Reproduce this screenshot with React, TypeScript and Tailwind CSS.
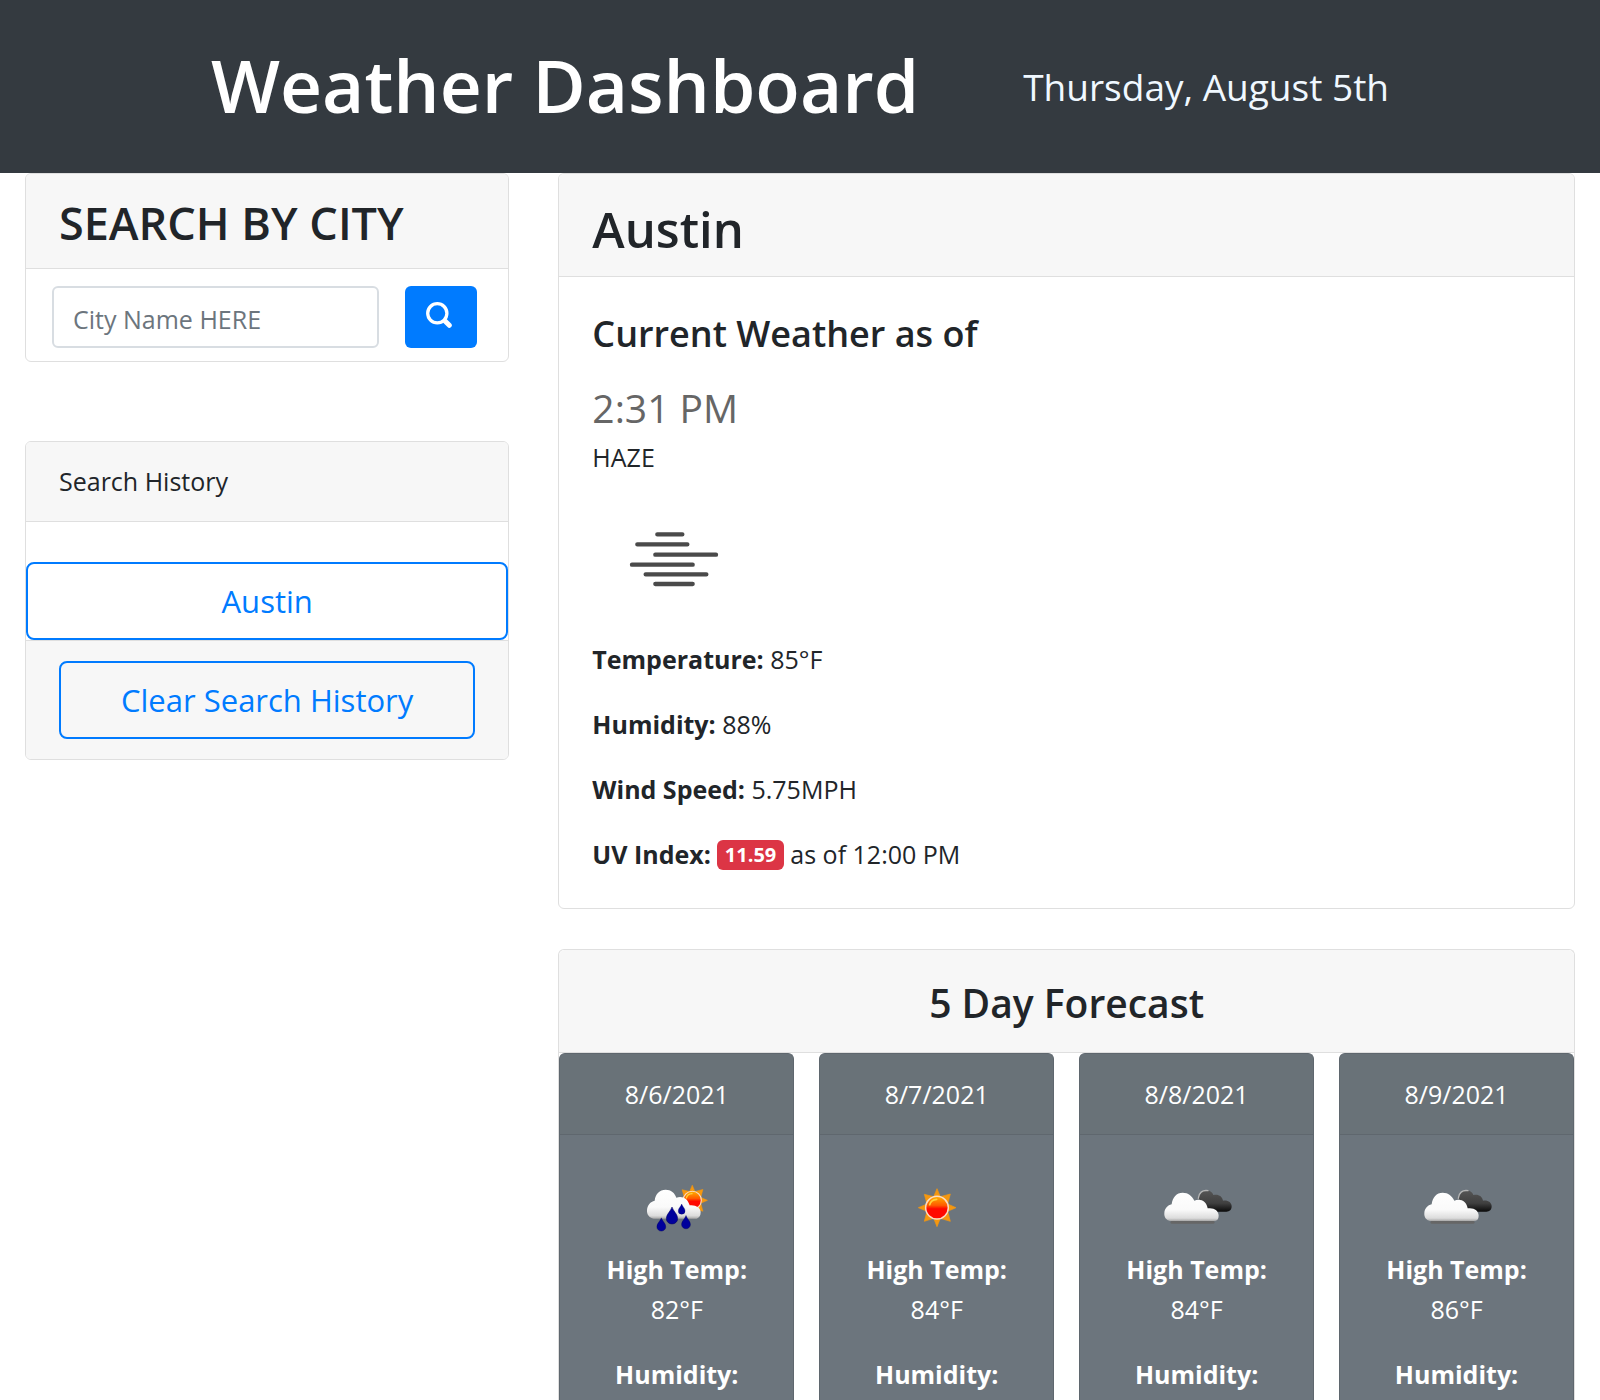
import React from "react";

function HazeIcon() {
  return (
    <svg className="block size-[163px]" viewBox="127 351 489 489" role="img" aria-label="Haze">
      <g stroke="#4a4a4a" strokeWidth="13" strokeLinecap="round">
        <path d="M323 523H398M263 553H413M317 584H499M247 614H429M288 643H470M317 672H429" />
      </g>
    </svg>
  );
}

function SearchIcon() {
  return (
    <svg className="size-[26px]" viewBox="0 0 26 26" fill="none" stroke="currentColor" aria-hidden="true">
      <circle cx="11.3" cy="11.3" r="9.6" strokeWidth="3.3" />
      <path d="M19.5 19.5L23.3 23.3" strokeWidth="5" strokeLinecap="round" />
    </svg>
  );
}

function SunShape() {
  return (
    <>
      <path
        fill="#f5970f"
        stroke="#f5970f"
        strokeWidth="2"
        d="M141 83L151 107L181 99L173 129L198 140L173 151L181 181L151 172L141 197L131 172L103 181L111 151L85 140L111 129L103 100L131 107Z"
      />
      <circle cx="141" cy="140" r="34" fill="url(#sunFill)" stroke="#fbdcc4" strokeWidth="4.5" />
      <path d="M119 131Q123 116 140 115" fill="none" stroke="#ffd23c" strokeWidth="5" strokeLinecap="round" />
    </>
  );
}

function SunIcon() {
  return (
    <svg className="block size-[82px]" viewBox="18 18 246 246" role="img" aria-label="Clear sky">
      <SunShape />
    </svg>
  );
}

function RainIcon() {
  const drop = "M0 -25C4 -12 17 -4 17 10A17 16 0 0 1 -17 10C-17 -4 -4 -12 0 -25Z";
  return (
    <svg className="block size-[82px]" viewBox="49 18 246 246" role="img" aria-label="Rain">
      <g transform="translate(105 6) scale(.8)">
        <SunShape />
      </g>
      <path
        fill="url(#cloudFill)"
        d="M102 173C88 170 81 160 82 147C83 132 92 122 105 119C107 99 120 86 138 86C154 86 165 95 170 110C188 104 204 112 210 133C228 131 243 140 243 154C243 165 238 171 231 173Z"
      />
      <g fill="#00009c" stroke="#00005c" strokeWidth="1.5">
        <path d={drop} transform="translate(157 163)" />
        <path d={drop} transform="translate(186 144) scale(.6)" />
        <path d={drop} transform="translate(199 183) scale(.78)" />
        <path d={drop} transform="translate(125 190) scale(.78)" />
      </g>
    </svg>
  );
}

function CloudIcon() {
  return (
    <svg className="block size-[82px]" viewBox="48 18 246 246" role="img" aria-label="Broken clouds">
      <path
        fill="url(#darkFill)"
        d="M176 112C178 96 188 87 201 88C210 89 217 94 220 102C234 98 247 105 249 119C264 117 275 124 275 136C275 146 269 152 259 152H205Z"
      />
      <path d="M175 112C176 96 187 86 204 89" fill="none" stroke="#b4b4b4" strokeWidth="4" strokeLinecap="round" />
      <path d="M96 184H219" stroke="#666666" strokeWidth="9" strokeLinecap="round" />
      <path
        fill="url(#cloudFill)"
        d="M90 180C78 177 72 168 73 156C74 143 83 132 95 130C97 109 110 95 128 95C145 95 156 105 163 119C182 111 200 122 203 142C222 139 236 149 236 164C236 174 231 180 222 180Z"
      />
    </svg>
  );
}

const details = [
  ["Temperature:", "85°F"],
  ["Humidity:", "88%"],
  ["Wind Speed:", "5.75MPH"],
];

const days = [
  { date: "8/6/2021", Icon: RainIcon, high: "82°F" },
  { date: "8/7/2021", Icon: SunIcon, high: "84°F" },
  { date: "8/8/2021", Icon: CloudIcon, high: "84°F" },
  { date: "8/9/2021", Icon: CloudIcon, high: "86°F" },
];

export default function App() {
  return (
    <div className="flex min-h-screen flex-col bg-white font-['Open_Sans',sans-serif] text-[25px] leading-[39px] text-[#212529]">
      <svg className="absolute size-0" aria-hidden="true">
        <defs>
          <linearGradient id="sunFill" x1="0" y1="0" x2="0" y2="1">
            <stop offset="0" stopColor="#ffb000" />
            <stop offset=".4" stopColor="#ff5a00" />
            <stop offset=".55" stopColor="#ff0800" />
            <stop offset="1" stopColor="#ff0800" />
          </linearGradient>
          <linearGradient id="cloudFill" x1="0" y1="0" x2="0" y2="1">
            <stop offset="0" stopColor="#ffffff" />
            <stop offset=".6" stopColor="#fafafa" />
            <stop offset=".9" stopColor="#dcdcdc" />
            <stop offset="1" stopColor="#a8a8a8" />
          </linearGradient>
          <linearGradient id="darkFill" x1="0" y1="0" x2="0" y2="1">
            <stop offset="0" stopColor="#555555" />
            <stop offset=".6" stopColor="#404040" />
            <stop offset="1" stopColor="#0a0a0a" />
          </linearGradient>
        </defs>
      </svg>

      <header className="flex items-center justify-center gap-[104px] bg-[#343a40] pt-9 pb-10">
        <h1 className="text-[73px] leading-[97px] font-semibold text-white">Weather Dashboard</h1>
        <p className="pt-1 text-[37px] leading-[60px] text-[#f0f8ff]">Thursday, August 5th</p>
      </header>

      <main className="grid flex-1 grid-cols-3">
        <aside className="pr-6 pl-[25px]">
          <section className="overflow-hidden rounded-md border border-[#dfdfdf]">
            <h2 className="border-b border-[#dfdfdf] bg-[#f7f7f7] px-[33px] pt-[23px] pb-[19px] text-[45px] leading-[52px] font-semibold">
              SEARCH BY CITY
            </h2>
            <form className="flex gap-[26px] pt-[17px] pr-[31px] pb-[13px] pl-[26px]" onSubmit={(e) => e.preventDefault()}>
              <input
                type="text"
                aria-label="City name"
                placeholder="City Name HERE"
                className="h-[62px] min-w-0 flex-1 rounded-md border-2 border-[#d8dde2] px-[19px] pt-[3px] placeholder:text-[#6c757d]"
              />
              <button type="submit" aria-label="Search" className="flex h-[62px] w-[72px] items-center justify-center rounded-md bg-[#007bff] pr-1 pb-1 text-white">
                <SearchIcon />
              </button>
            </form>
          </section>

          <section className="mt-[79px] overflow-hidden rounded-md border border-[#dfdfdf]">
            <h2 className="border-b border-[#dfdfdf] bg-[#f7f7f7] px-[33px] py-5">Search History</h2>
            <div className="pt-10">
              <button type="button" className="block h-[78px] w-full rounded-lg border-2 border-[#007bff] text-[31px] text-[#007bff]">
                Austin
              </button>
            </div>
            <div className="border-t border-[#dfdfdf] bg-[#f7f7f7] px-[33px] py-5">
              <button type="button" className="block h-[78px] w-full rounded-lg border-2 border-[#007bff] text-[31px] text-[#007bff]">
                Clear Search History
              </button>
            </div>
          </section>
        </aside>

        <div className="col-span-2 flex flex-col px-[25px]">
          <section className="overflow-hidden rounded-md border border-[#dfdfdf]">
            <h2 className="border-b border-[#dfdfdf] bg-[#f7f7f7] px-[33px] pt-6 pb-4 text-[49px] leading-[62px] font-semibold">Austin</h2>
            <div className="px-[33px] pt-[33px] pb-[34px]">
              <h3 className="text-[36px] leading-[48px] font-semibold">Current Weather as of</h3>
              <p className="mt-[26px] text-[39px] leading-[48px] text-[#666666]">2:31 PM</p>
              <p className="mt-[6px]">HAZE</p>
              <HazeIcon />
              <div className="flex flex-col gap-[26px]">
                {details.map(([label, value]) => (
                  <p key={label}>
                    <b className="font-bold">{label}</b> {value}
                  </p>
                ))}
                <p className="flex items-center gap-[6px]">
                  <b className="font-bold">UV Index:</b>
                  <span className="rounded-md bg-[#dc3545] px-2 text-[20px] leading-[30px] font-bold text-white">11.59</span>
                  <span>as of 12:00 PM</span>
                </p>
              </div>
            </div>
          </section>

          <section className="mt-10 flex flex-1 flex-col rounded-t-md border border-b-0 border-[#dfdfdf]">
            <h2 className="rounded-t-md border-b border-[#dfdfdf] bg-[#f7f7f7] pt-6 pb-5 text-center text-[39px] leading-[58px] font-semibold">
              5 Day Forecast
            </h2>
            <div className="grid flex-1 grid-cols-4 gap-[25px]">
              {days.map(({ date, Icon, high }) => (
                <article key={date} className="rounded-t-md border border-b-0 border-[#5f676e] bg-[#6c757d] text-center text-white">
                  <h3 className="rounded-t-md border-b border-[#5f676e] bg-[#697278] pt-[21px] pb-5">{date}</h3>
                  <div className="flex flex-col items-center pt-8 leading-[40px]">
                    <Icon />
                    <b className="font-bold">High Temp:</b>
                    <span>{high}</span>
                    <b className="mt-[25px] font-bold">Humidity:</b>
                  </div>
                </article>
              ))}
            </div>
          </section>
        </div>
      </main>
    </div>
  );
}
